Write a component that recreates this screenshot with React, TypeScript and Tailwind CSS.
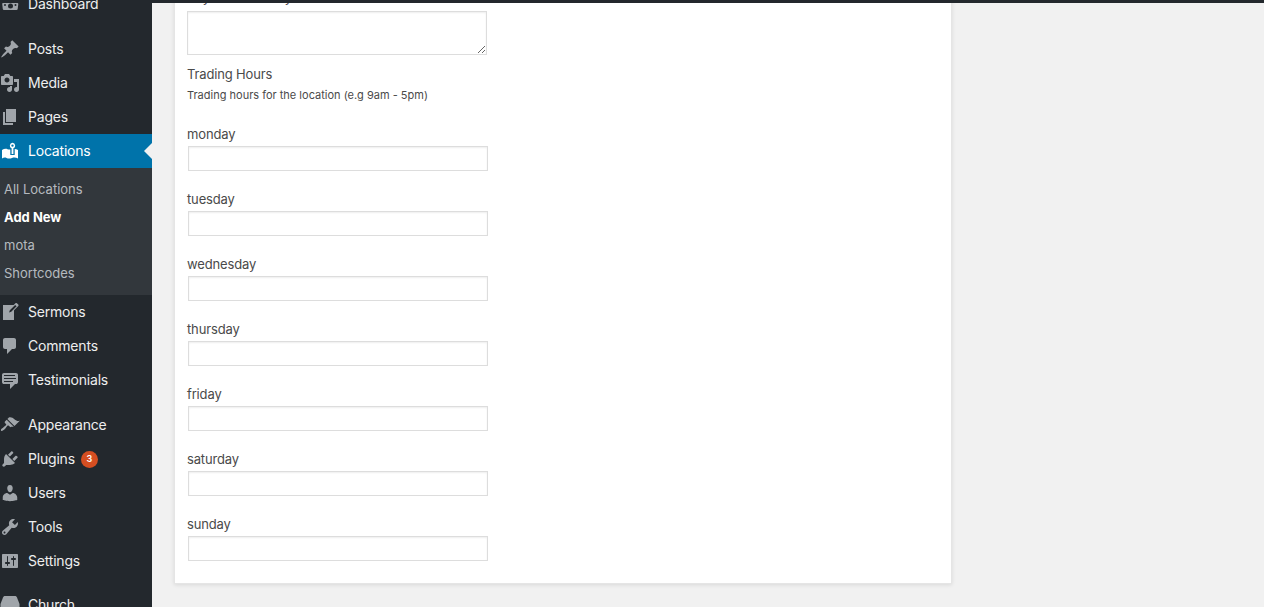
import React from 'react';

const font = { fontFamily: 'Inter, "Noto Sans", sans-serif' };

const paths = {
  post: 'M10.44 3.02l1.82-1.82 6.36 6.35-1.83 1.82c-1.05-.68-2.48-.57-3.41.36l-.75.75c-.92.93-1.04 2.35-.35 3.41l-1.83 1.82-2.41-2.41-2.8 2.79c-.42.42-3.38 2.71-3.8 2.29s1.86-3.39 2.28-3.81l2.79-2.79L4.1 9.36l1.83-1.82c1.05.69 2.48.57 3.4-.36l.75-.75c.93-.92 1.05-2.35.36-3.41z',
  media: 'M13 11V4c0-.55-.45-1-1-1h-1.67L9 1H5L3.67 3H2c-.55 0-1 .45-1 1v7c0 .55.45 1 1 1h10c.55 0 1-.45 1-1zM7 4.5c1.38 0 2.5 1.12 2.5 2.5S8.38 9.5 7 9.5 4.5 8.38 4.5 7 5.62 4.5 7 4.5zM14 6h5v10.5c0 1.38-1.12 2.5-2.5 2.5S14 17.88 14 16.5s1.12-2.5 2.5-2.5c.17 0 .34.02.5.05V9h-3V6zm-4 8.05V13h2v3.5c0 1.38-1.12 2.5-2.5 2.5S7 17.88 7 16.5 8.12 14 9.5 14c.17 0 .34.02.5.05z',
  page: 'M6 15V2h10v13H6zm-1 1h8v2H3V5h2v11z',
  write: 'M16.89 1.2l1.41 1.41c.39.39.39 1.02 0 1.41L14 8.33V18H3V3h10.67l1.8-1.8c.4-.39 1.03-.4 1.42 0zm-5.66 8.48l5.37-5.36-1.42-1.42-5.36 5.37-.71 2.12z',
  comment: 'M5 2h9c1.1 0 2 .9 2 2v7c0 1.1-.9 2-2 2h-2l-5 5v-5H5c-1.1 0-2-.9-2-2V4c0-1.1.9-2 2-2z',
  testimonial: 'M4 3h12c.55 0 1.02.2 1.41.59S18 4.45 18 5v7c0 .55-.2 1.02-.59 1.41S16.55 14 16 14h-1l-5 5v-5H4c-.55 0-1.02-.2-1.41-.59S2 12.55 2 12V5c0-.55.2-1.02.59-1.41S3.45 3 4 3zm11 2H4v1h11V5zm1 3H4v1h12V8zm-3 3H4v1h9v-1z',
  appearance: 'M14.48 11.06L7.41 3.99l1.5-1.5c.5-.56 2.3-.47 3.51.32 1.21.8 1.43 1.28 2.91 2.1 1.18.64 2.45 1.26 4.45.85zm-.71.71L6.7 4.7 4.93 6.47c-.39.39-.39 1.02 0 1.41l1.06 1.06c.39.39.39 1.03 0 1.42-.6.6-1.43 1.11-2.21 1.69-.35.26-.7.53-1.01.84C1.43 13.23.4 14.98 1.1 15.68c.71.71 2.44-.32 3.78-1.66.31-.31.59-.66.85-1.01.58-.78 1.09-1.61 1.69-2.21.39-.39 1.02-.39 1.41 0l1.06 1.06c.39.39 1.02.39 1.41 0z',
  plugin: 'M13.11 4.36L9.87 7.6 8 5.73l3.24-3.24c.35-.34 1.05-.2 1.56.32.52.51.66 1.21.31 1.55zm-8 1.77l.91-1.12 9.01 9.01-1.19.84c-.71.71-2.63 1.16-3.82 1.16H6.14L4.9 17.26c-.59.59-1.54.59-2.12 0-.59-.58-.59-1.53 0-2.12l1.24-1.24v-3.88c0-1.13.4-3.19 1.09-3.89zm7.26 3.97l3.24-3.24c.34-.35 1.04-.21 1.55.31.52.51.66 1.21.31 1.55l-3.24 3.25z',
  users: 'M10 9.25c-2.27 0-2.73-3.44-2.73-3.44C7 4.02 7.82 2 9.97 2c2.16 0 2.98 2.02 2.71 3.81 0 0-.41 3.44-2.68 3.44zm0 2.57L12.72 10c2.39 0 4.52 2.33 4.52 4.53v2.49s-3.65 1.13-7.24 1.13c-3.65 0-7.24-1.13-7.24-1.13v-2.49c0-2.25 1.94-4.48 4.47-4.48z',
  tools: 'M16.68 9.77c-1.34 1.34-3.3 1.67-4.95.99l-5.41 6.52c-.99.99-2.59.99-3.58 0s-.99-2.59 0-3.57l6.52-5.42c-.68-1.65-.35-3.61.99-4.95 1.28-1.28 3.12-1.62 4.72-1.06l-2.89 2.89 2.82 2.82 2.86-2.87c.53 1.58.18 3.39-1.08 4.65zM3.81 16.21c.4.39 1.04.39 1.43 0 .4-.4.4-1.04 0-1.43-.39-.4-1.03-.4-1.43 0-.39.39-.39 1.03 0 1.43z',
  settings: 'M18 16V4c0-.55-.45-1-1-1H3c-.55 0-1 .45-1 1v12c0 .55.45 1 1 1h14c.55 0 1-.45 1-1zM8 11h1c.55 0 1 .45 1 1s-.45 1-1 1H8v1.5c0 .28-.22.5-.5.5s-.5-.22-.5-.5V13H6c-.55 0-1-.45-1-1s.45-1 1-1h1V5.5c0-.28.22-.5.5-.5s.5.22.5.5V11zm5-2h-1c-.55 0-1-.45-1-1s.45-1 1-1h1V5.5c0-.28.22-.5.5-.5s.5.22.5.5V7h1c.55 0 1 .45 1 1s-.45 1-1 1h-1v5.5c0 .28-.22.5-.5.5s-.5-.22-.5-.5V9z',
  // only the lower part of the gauge is on screen
  dashboard: 'M3 9h14.500c.5 0 .8.400.8 1l-.6 5c-.1.700-.5 1-1.200 1H4c-.7 0-1.100-.3-1.200-1L2.200 10c0-.6.3-1 .8-1zM10.500 9.500a2.500 2.500 0 1 0 0 5 2.500 2.500 0 0 0 0-5zM5 10a1 1 0 1 0 0 2 1 1 0 0 0 0-2zM15.500 10a1 1 0 1 0 0 2 1 1 0 0 0 0-2z',
  location: 'M12.500 1.800a2.800 2.800 0 0 1 .9 5.400V13h-1.800V7.200a2.800 2.800 0 0 1 .9-5.400zm0 1.600a1.200 1.200 0 1 0 0 2.400 1.200 1.200 0 0 0 0-2.400zM2 9c2-1.300 4-1.500 5.500-.8 1 .4 2 .5 2.800.3V14h4.400V8c1.200.1 2.300.4 3.300 1v8.500c-2-1.200-4-1.300-6-.6-2 .8-4 .7-5.500 0-1.500-.6-3-.4-4.500.6z',
  // top of the icon only, the rest is below the fold
  church: 'M5 1h10c1 0 1.500.5 2 1.500l2.500 6.500v5H.5V9L3 2.500C3.500 1.500 4 1 5 1z',
};

type IconName = keyof typeof paths;

const Icon = ({ name, active = false }: { name: IconName; active?: boolean }) => (
  <svg viewBox="0 0 20 20" className={`w-5 h-5 shrink-0 ${active ? 'fill-white' : 'fill-[#a0a5aa]'}`}>
    <path d={paths[name]} fillRule="evenodd" />
  </svg>
);

const MenuItem = ({ icon, label, active = false, badge }: { icon: IconName; label: string; active?: boolean; badge?: string }) => (
  <div className={`relative flex items-center h-[34px] text-[14px] tracking-[-0.2px] ${active ? 'bg-[#0073aa] text-white' : 'text-[#eeeeee]'}`}>
    <div className="w-7 shrink-0">
      <Icon name={icon} active={active} />
    </div>
    <span className="mb-[2px]">{label}</span>
    {badge && (
      <span className="ml-[6px] w-[17px] h-[17px] rounded-full bg-[#d54e21] text-white text-[9px] font-semibold flex items-center justify-center">
        {badge}
      </span>
    )}
    {active && (
      <span className="absolute right-0 top-[9px] border-y-8 border-r-8 border-y-transparent border-r-[#f1f1f1]" />
    )}
  </div>
);

const Submenu = () => (
  <div className="bg-[#32373c] pt-2 pb-[7px] text-[13px] text-[#f0f5fa]/70">
    <div className="h-7 pl-1 flex items-center">All Locations</div>
    <div className="h-7 pl-1 flex items-center font-bold text-white">Add New</div>
    <div className="h-7 pl-1 flex items-center">mota</div>
    <div className="h-7 pl-1 flex items-center">Shortcodes</div>
  </div>
);

const Sidebar = () => (
  <aside className="w-[152px] shrink-0 h-full bg-[#23282d] overflow-hidden">
    <div className="-mt-[13px]">
      <MenuItem icon="dashboard" label="Dashboard" />
      <div className="h-[11px]" />
      <MenuItem icon="post" label="Posts" />
      <MenuItem icon="media" label="Media" />
      <MenuItem icon="page" label="Pages" />
      <MenuItem icon="location" label="Locations" active />
      <Submenu />
      <MenuItem icon="write" label="Sermons" />
      <MenuItem icon="comment" label="Comments" />
      <MenuItem icon="testimonial" label="Testimonials" />
      <div className="h-[11px]" />
      <MenuItem icon="appearance" label="Appearance" />
      <MenuItem icon="plugin" label="Plugins" badge="3" />
      <MenuItem icon="users" label="Users" />
      <MenuItem icon="tools" label="Tools" />
      <MenuItem icon="settings" label="Settings" />
      <div className="h-[10px]" />
      <MenuItem icon="church" label="Church" />
    </div>
  </aside>
);

const days = ['monday', 'tuesday', 'wednesday', 'thursday', 'friday', 'saturday', 'sunday'];

const DayField = ({ day }: { day: string }) => (
  <div className="mb-[19px] last:mb-0">
    <label className="block h-[18px] leading-[18px] text-[13px] tracking-[-0.15px] text-[#4a4a4a]">{day}</label>
    <input
      type="text"
      className="block mt-[3px] ml-px w-[300px] h-[25px] bg-white border border-[#dddddd] shadow-[inset_0_1px_2px_rgba(0,0,0,0.07)] outline-none"
    />
  </div>
);

export default function App() {
  return (
    <div className="flex h-screen overflow-hidden bg-[#f1f1f1]" style={font}>
      <Sidebar />
      <div className="flex-1 min-w-0 flex flex-col">
        <div className="relative z-10 h-[3px] shrink-0 bg-[#23282d]" />
        <main className="flex-1 overflow-hidden pl-[22px]">
          <section className="w-[778px] -mt-10 pt-[24px] pb-[22px] pl-[12px] bg-white border border-[#e5e5e5] shadow-[0_1px_4px_rgba(0,0,0,0.1)]">
            <label className="block h-[18px] leading-[18px] text-[13px] text-[#4a4a4a]">Physical Delivery</label>
            <textarea className="block mt-[5px] w-[300px] h-[44px] bg-white border border-[#dddddd] shadow-[inset_0_1px_2px_rgba(0,0,0,0.07)] outline-none" />
            <h3 className="mt-[10px] h-[18px] leading-[18px] text-[13px] tracking-[-0.15px] font-normal text-[#4a4a4a]">Trading Hours</h3>
            <p className="mt-[3px] h-[18px] leading-[18px] text-[11px] text-[#4a4a4a]">Trading hours for the location (e.g 9am - 5pm)</p>
            <div className="mt-[21px]">
              {days.map((day) => (
                <DayField key={day} day={day} />
              ))}
            </div>
          </section>
        </main>
      </div>
    </div>
  );
}
